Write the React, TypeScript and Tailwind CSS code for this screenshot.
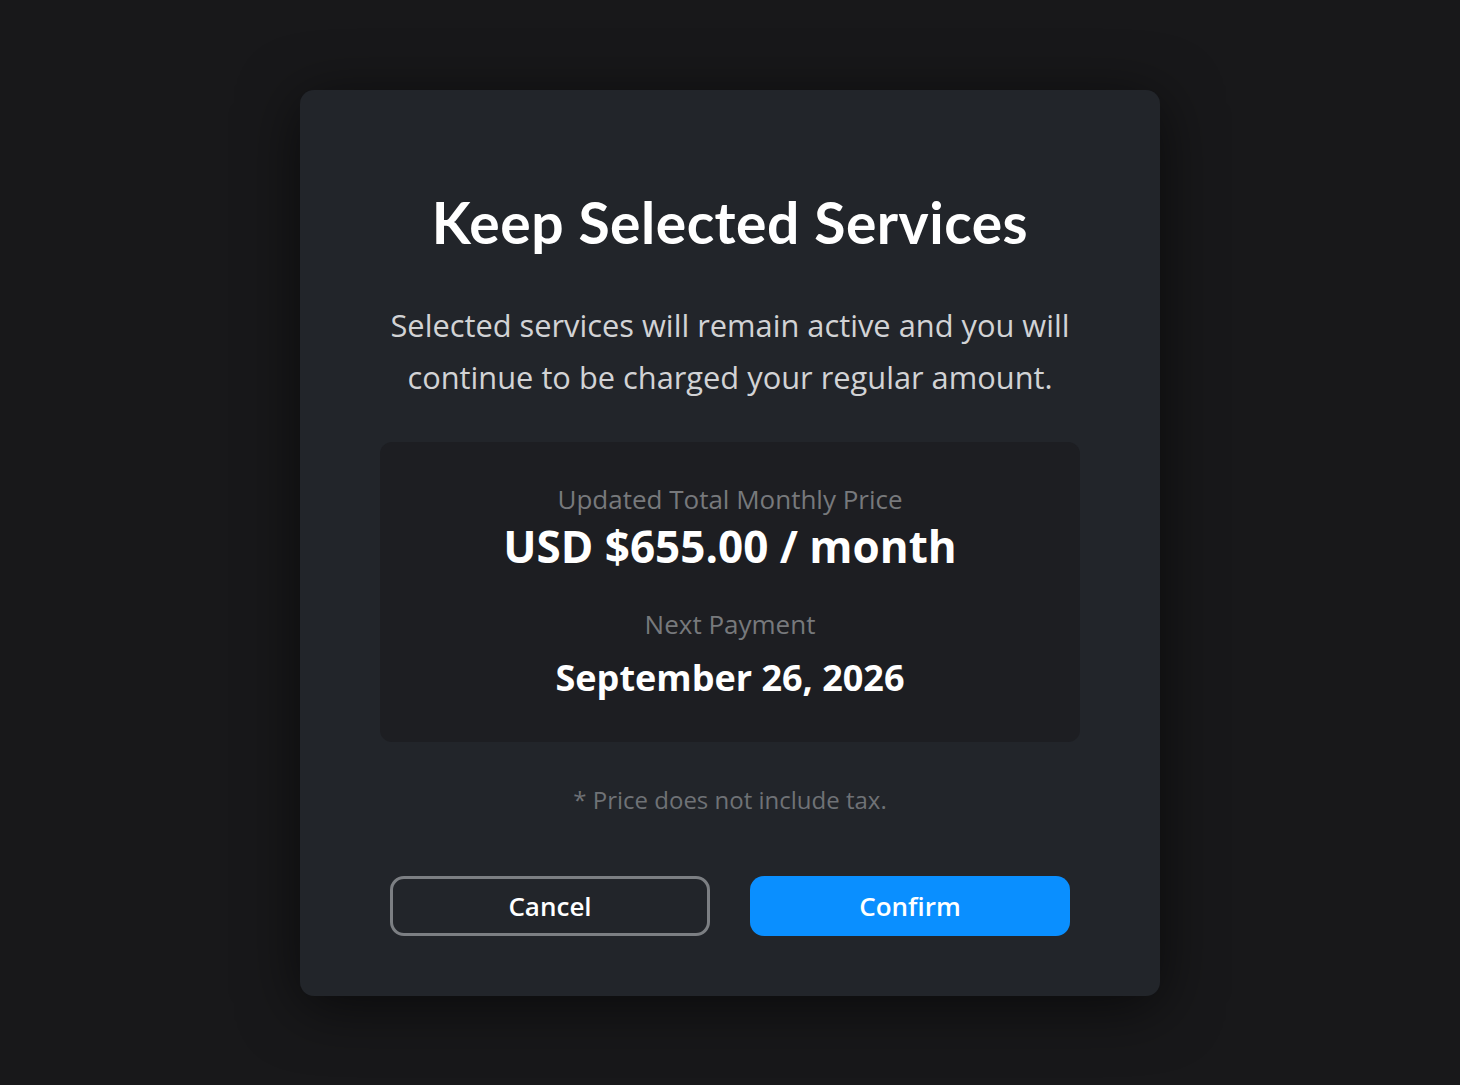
import React from "react";

export default function App() {
  return (
    <div className="w-[1460px] h-[1085px] bg-[#18181a] flex justify-center pt-[90px]" style={{ fontFamily: '"Open Sans", sans-serif' }}>
      <div className="w-[860px] h-[906px] bg-[#22252a] rounded-[14px] shadow-[0_10px_60px_rgba(0,0,0,0.6)] flex flex-col items-center">
        <h1 className="mt-[100px] text-white text-[57px] font-bold leading-[64px] tracking-[0.5px]" style={{ fontFamily: 'Lato, sans-serif' }}>
          Keep Selected Services
        </h1>
        <p className="mt-[45px] text-[#d2d3d5] text-[30.8px] leading-[52px] text-center w-[740px]">
          Selected services will remain active and you will continue to be charged your regular amount.
        </p>
        <div className="mt-[39px] w-[700px] h-[300px] bg-[#1d1e22] rounded-[12px] flex flex-col items-center pt-[38px]">
          <div className="text-[#77797c] text-[26px] leading-[38px]">Updated Total Monthly Price</div>
          <div className="text-white text-[44px] font-bold leading-[56px]">USD $655.00 / month</div>
          <div className="mt-[31px] text-[#77797c] text-[26px] leading-[38px]">Next Payment</div>
          <div className="mt-[11px] text-white text-[36px] font-bold leading-[48px]">September 26, 2026</div>
        </div>
        <div className="mt-[41px] text-[#6f7276] text-[24px] leading-[34px]">* Price does not include tax.</div>
        <div className="mt-[59px] flex gap-[40px]">
          <button className="w-[320px] h-[60px] rounded-[14px] border-[3px] border-[#7c7f83] text-white text-[26px] font-semibold">Cancel</button>
          <button className="w-[320px] h-[60px] rounded-[14px] bg-[#0a8fff] text-white text-[26px] font-semibold">Confirm</button>
        </div>
      </div>
    </div>
  );
}
